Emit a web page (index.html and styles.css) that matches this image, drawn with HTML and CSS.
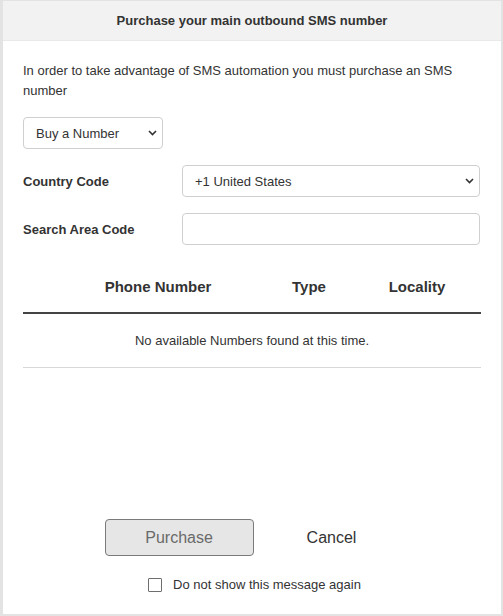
FILE: index.html
```html
<!DOCTYPE html>
<html lang="en">
<head>
<meta charset="utf-8">
<title>Purchase SMS number</title>
<link rel="stylesheet" href="styles.css">
</head>
<body>
<div class="backdrop">
  <div class="modal">
    <div class="modal-header">Purchase your main outbound SMS number</div>
    <div class="modal-body">
      <p class="intro">In order to take advantage of SMS automation you must purchase an SMS number</p>
      <div class="select-wrap select-small">
        <select class="field">
          <option>Buy a Number</option>
        </select>
        <svg class="chev" width="9" height="6" viewBox="0 0 9 6"><path d="M1 1 L4.5 4.5 L8 1" fill="none" stroke="#333" stroke-width="1.6"/></svg>
      </div>
      <div class="form-row">
        <label class="label">Country Code</label>
        <div class="select-wrap select-wide">
          <select class="field">
            <option>+1 United States</option>
          </select>
          <svg class="chev" width="9" height="6" viewBox="0 0 9 6"><path d="M1 1 L4.5 4.5 L8 1" fill="none" stroke="#333" stroke-width="1.6"/></svg>
        </div>
      </div>
      <div class="form-row">
        <label class="label">Search Area Code</label>
        <input class="field input-wide" type="text">
      </div>
      <div class="table">
        <div class="thead">
          <span></span>
          <span class="th">Phone Number</span>
          <span class="th">Type</span>
          <span class="th">Locality</span>
        </div>
        <div class="empty-row">No available Numbers found at this time.</div>
      </div>
    </div>
    <div class="modal-footer">
      <div class="actions">
        <button class="btn-purchase" type="button">Purchase</button>
        <button class="btn-cancel" type="button">Cancel</button>
      </div>
      <label class="dont-show"><span class="checkbox"></span>Do not show this message again</label>
    </div>
  </div>
</div>
</body>
</html>
```
FILE: styles.css
```css
* { box-sizing: border-box; }
html, body {
  margin: 0;
  padding: 0;
}
body {
  font-family: "Liberation Sans", Arial, sans-serif;
  color: #333;
  background: #e3e3e3;
}
.backdrop {
  width: 503px;
  height: 616px;
  padding: 1px 2px 2px 3px;
}
.modal {
  width: 498px;
  height: 613px;
  background: #fff;
  display: flex;
  flex-direction: column;
}
.modal-header {
  height: 40px;
  background: #f2f2f2;
  border-bottom: 1px solid #e9e9e9;
  font-size: 13px;
  font-weight: bold;
  color: #333;
  display: flex;
  align-items: center;
  justify-content: center;
}
.modal-body {
  padding: 20px 21px 0 20px;
  flex: 1;
}
.intro {
  margin: 0 0 16px;
  font-size: 13px;
  line-height: 20px;
  color: #333;
}
.select-wrap {
  position: relative;
}
.select-small {
  width: 140px;
}
.select-wide {
  width: 298px;
}
.field {
  display: block;
  width: 100%;
  height: 32px;
  border: 1px solid #cfcfcf;
  border-radius: 4px;
  background: #fff;
  font-family: "Liberation Sans", Arial, sans-serif;
  font-size: 13px;
  color: #333;
  padding: 0 12px;
  appearance: none;
  -webkit-appearance: none;
  outline: none;
}
.chev {
  position: absolute;
  right: 6px;
  top: 13px;
  pointer-events: none;
}
.form-row {
  display: flex;
  align-items: center;
  margin-top: 16px;
}
.label {
  width: 159px;
  font-size: 13px;
  font-weight: bold;
  color: #333;
}
.input-wide {
  width: 298px;
  height: 32px;
}
.table {
  margin-top: 16px;
  width: 458px;
}
.thead {
  display: grid;
  grid-template-columns: 28px 214px 88px 128px;
  height: 53px;
  align-items: center;
  border-bottom: 2px solid #444;
}
.th {
  text-align: center;
  font-size: 15px;
  font-weight: bold;
  color: #333;
}
.empty-row {
  height: 54px;
  display: flex;
  align-items: center;
  justify-content: center;
  font-size: 13px;
  color: #333;
  border-bottom: 1px solid #d8d8d8;
}
.modal-footer {
  display: flex;
  flex-direction: column;
  align-items: center;
  padding-bottom: 21px;
}
.actions {
  display: flex;
  align-items: center;
  margin-right: 43px;
}
.btn-purchase {
  width: 149px;
  height: 37px;
  background: #e6e6e6;
  border: 1px solid #7a7a7a;
  border-radius: 4px;
  font-family: "Liberation Sans", Arial, sans-serif;
  font-size: 16px;
  color: #6a6a6a;
  padding: 0;
}
.btn-cancel {
  margin-left: 53px;
  background: none;
  border: none;
  padding: 0;
  font-family: "Liberation Sans", Arial, sans-serif;
  font-size: 16px;
  color: #333;
}
.dont-show {
  display: flex;
  align-items: center;
  margin-top: 21px;
  margin-left: 5px;
  font-size: 13px;
  color: #333;
  line-height: 16px;
}
.checkbox {
  width: 14px;
  height: 14px;
  border: 1px solid #6e6e6e;
  border-radius: 1px;
  background: #fff;
  margin-right: 11px;
}
```
